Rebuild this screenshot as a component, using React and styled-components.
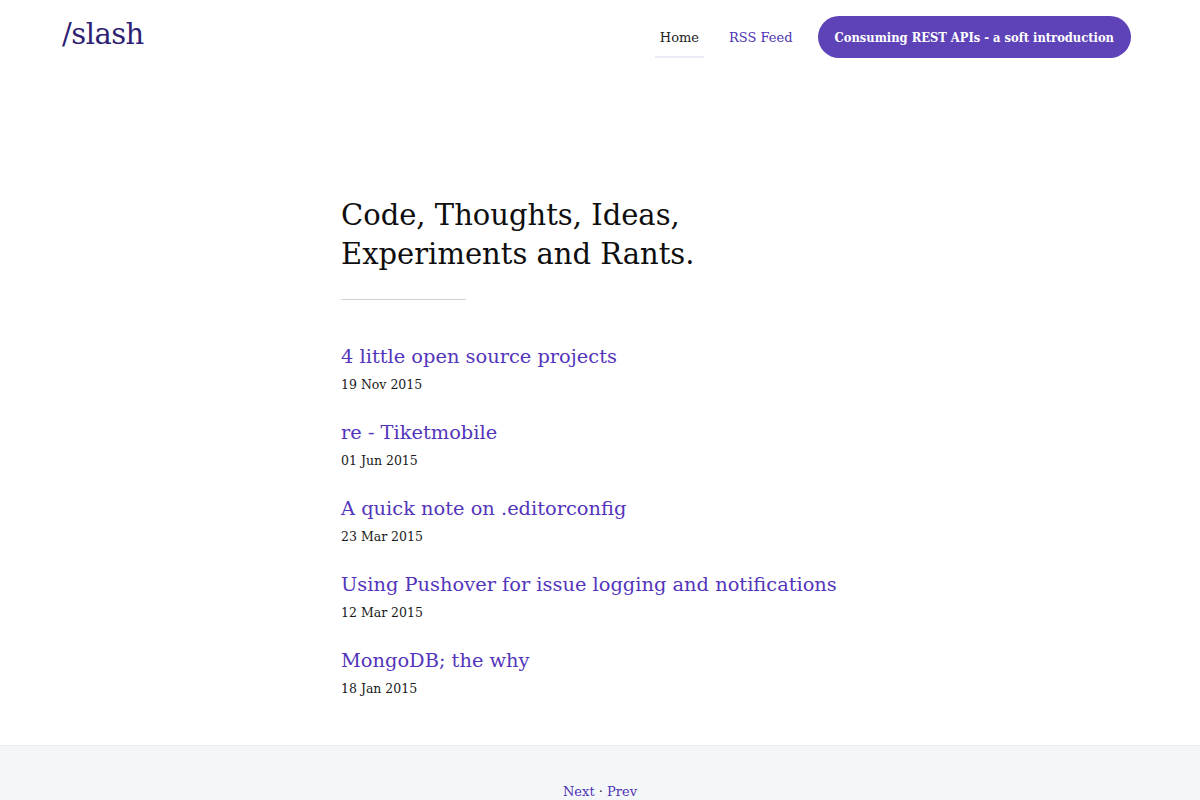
import React from 'react';
import styled, { createGlobalStyle } from 'styled-components';

const posts = [
  { title: '4 little open source projects', date: '19 Nov 2015' },
  { title: 're - Tiketmobile', date: '01 Jun 2015' },
  { title: 'A quick note on .editorconfig', date: '23 Mar 2015' },
  { title: 'Using Pushover for issue logging and notifications', date: '12 Mar 2015' },
  { title: 'MongoDB; the why', date: '18 Jan 2015' },
];

const App = () => {
  return (
    <>
      <GlobalStyle />
      <Header>
        <Logo href="#">/slash</Logo>
        <Nav>
          <NavLink href="#" $active>Home</NavLink>
          <NavLink href="#">RSS Feed</NavLink>
          <PillLink href="#">Consuming REST APIs - a soft introduction</PillLink>
        </Nav>
      </Header>
      <Main>
        <Heading>Code, Thoughts, Ideas,<br />Experiments and Rants.</Heading>
        <Divider />
        <PostList>
          {posts.map((post) => (
            <Post key={post.title}>
              <PostTitle href="#">{post.title}</PostTitle>
              <PostDate>{post.date}</PostDate>
            </Post>
          ))}
        </PostList>
      </Main>
      <Footer>
        <Pager>
          <a href="#">Next</a> · <a href="#">Prev</a>
        </Pager>
      </Footer>
    </>
  );
};

export default App;

const GlobalStyle = createGlobalStyle`
  html, body {
    margin: 0;
    padding: 0;
    background: #fff;
    overflow: hidden;
  }
  body {
    font-family: "DejaVu Serif", "Liberation Serif", serif;
    color: #111;
  }
  a {
    text-decoration: none;
  }
`;

const Header = styled.header`
  display: flex;
  align-items: center;
  justify-content: space-between;
  height: 74px;
  padding: 0 69px 0 62px;
`;

const Logo = styled.a`
  font-size: 29px;
  line-height: 1;
  color: #2e1f73;
  letter-spacing: -0.5px;
  margin-top: -6px;
`;

const Nav = styled.nav`
  display: flex;
  align-items: center;
  gap: 20px;
`;

const NavLink = styled.a`
  display: flex;
  align-items: center;
  height: 42px;
  padding: 2px 5px 0;
  box-sizing: border-box;
  font-size: 13px;
  color: ${(p) => (p.$active ? '#222' : '#4f33b3')};
  border-bottom: 2px solid ${(p) => (p.$active ? '#ecebf7' : 'transparent')};
`;

const PillLink = styled.a`
  display: flex;
  align-items: center;
  height: 42px;
  padding: 0 17px;
  border-radius: 21px;
  background: #5e43b8;
  color: #fff;
  font-family: "DejaVu Serif Condensed", "DejaVu Serif", serif;
  font-size: 12.8px;
  font-weight: bold;
`;

const Main = styled.main`
  width: 518px;
  margin: 0 auto;
  padding: 122px 0 44px;
  box-sizing: border-box;
`;

const Heading = styled.h1`
  margin: 0;
  font-size: 29px;
  font-weight: normal;
  line-height: 39px;
  color: #0e0e0e;
`;

const Divider = styled.hr`
  width: 125px;
  margin: 25px 0 0;
  border: 0;
  border-top: 1px solid #d2d2d6;
`;

const PostList = styled.ul`
  list-style: none;
  margin: 42px 0 0;
  padding: 0;
  display: flex;
  flex-direction: column;
  gap: 21px;
`;

const Post = styled.li`
  display: flex;
  flex-direction: column;
`;

const PostTitle = styled.a`
  font-size: 19.4px;
  line-height: 30px;
  color: #5335bc;
`;

const PostDate = styled.span`
  font-size: 12.5px;
  line-height: 25px;
  color: #1a1a1a;
`;

const Footer = styled.footer`
  background: #f4f7fa;
  border-top: 1px solid #eaedf1;
  padding: 38px 0 40px;
  min-height: 120px;
`;

const Pager = styled.div`
  text-align: center;
  font-size: 13px;
  color: #333;

  a {
    color: #4f33b3;
  }
`;
